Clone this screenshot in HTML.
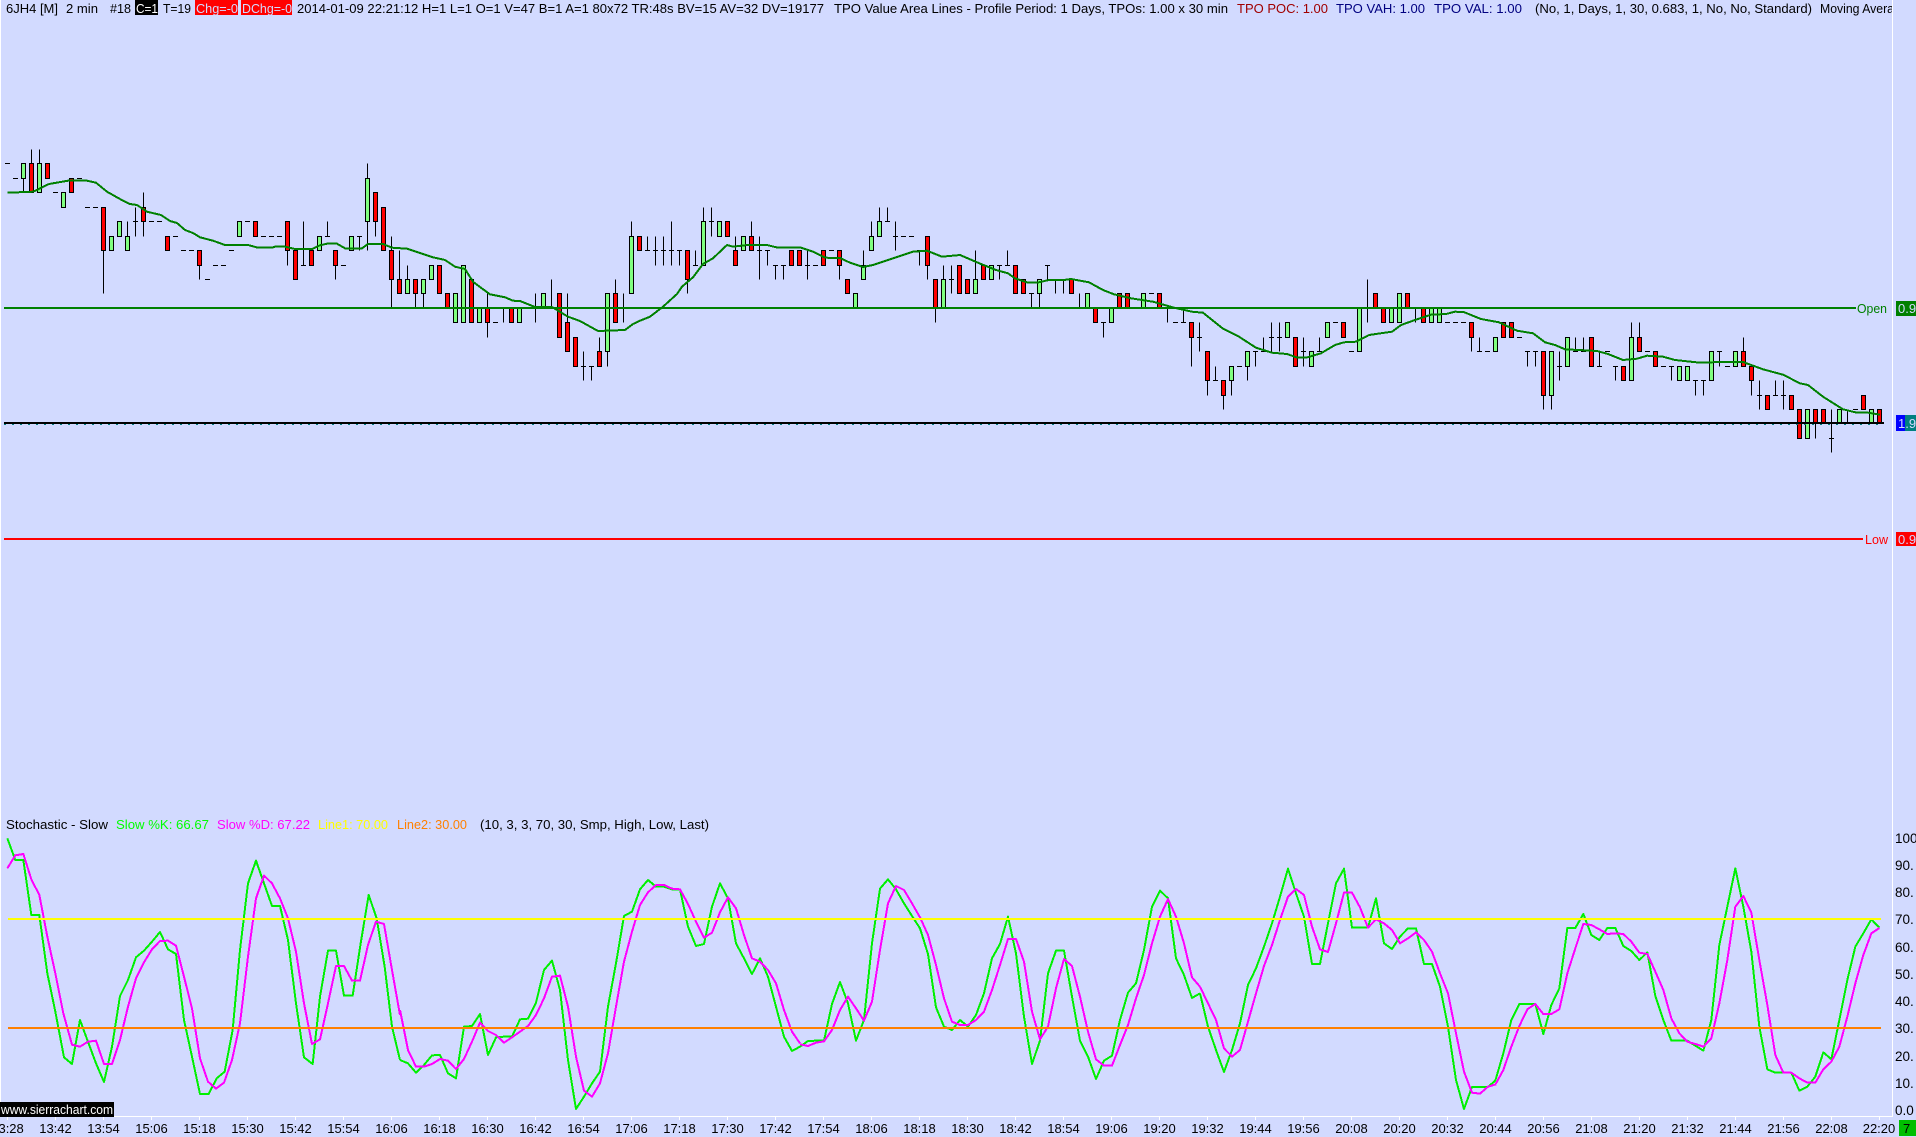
<!DOCTYPE html>
<html><head><meta charset="utf-8"><title>6JH4 Chart</title>
<style>
html,body{margin:0;padding:0;background:#d2daff;width:1916px;height:1137px;overflow:hidden}
svg{display:block;position:absolute;left:0;top:0}
text{font-family:"Liberation Sans",Arial,sans-serif;font-size:12.5px;white-space:pre}
.t text{font-size:13px;text-anchor:middle;fill:#000}
.y text{font-size:13.5px;fill:#000}
</style></head><body>
<svg width="1916" height="1137" viewBox="0 0 1916 1137" xmlns="http://www.w3.org/2000/svg">
<defs><clipPath id="c"><rect x="0" y="0" width="1892" height="20"/></clipPath></defs>
<rect width="1916" height="1137" fill="#d2daff"/>
<g shape-rendering="crispEdges">
<rect x="0" y="0" width="1" height="1116" fill="#fff"/>
<rect x="1892" y="0" width="1" height="1117" fill="#fff"/>
<rect x="0" y="1116" width="1893" height="1" fill="#fff"/>
<path stroke="#fff" stroke-width="1" d="M7.5 1116V1120M55.5 1116V1120M103.5 1116V1120M151.5 1116V1120M199.5 1116V1120M247.5 1116V1120M295.5 1116V1120M343.5 1116V1120M391.5 1116V1120M439.5 1116V1120M487.5 1116V1120M535.5 1116V1120M583.5 1116V1120M631.5 1116V1120M679.5 1116V1120M727.5 1116V1120M775.5 1116V1120M823.5 1116V1120M871.5 1116V1120M919.5 1116V1120M967.5 1116V1120M1015.5 1116V1120M1063.5 1116V1120M1111.5 1116V1120M1159.5 1116V1120M1207.5 1116V1120M1255.5 1116V1120M1303.5 1116V1120M1351.5 1116V1120M1399.5 1116V1120M1447.5 1116V1120M1495.5 1116V1120M1543.5 1116V1120M1591.5 1116V1120M1639.5 1116V1120M1687.5 1116V1120M1735.5 1116V1120M1783.5 1116V1120M1831.5 1116V1120M1879.5 1116V1120"/>

<!-- wicks and dojis -->
<path fill="none" stroke="#000" stroke-width="1" d="M23.5 178.5V192.5M31.5 149.5V163.5M39.5 149.5V163.5M103.5 250.5V293.5M127.5 221.5V236.5M135.5 207.5V236.5M133 221.5h5M143.5 192.5V236.5M199.5 265.5V279.5M287.5 250.5V265.5M303.5 221.5V265.5M301 265.5h5M327.5 221.5V236.5M325 236.5h5M335.5 265.5V279.5M359.5 236.5V250.5M357 236.5h5M367.5 163.5V250.5M375.5 221.5V236.5M391.5 236.5V308.5M399.5 250.5V279.5M407.5 265.5V279.5M415.5 293.5V308.5M423.5 293.5V308.5M487.5 293.5V337.5M503.5 308.5V322.5M535.5 293.5V322.5M551.5 279.5V308.5M567.5 293.5V322.5M583.5 351.5V380.5M581 366.5h5M591.5 366.5V380.5M589 366.5h5M599.5 337.5V351.5M607.5 351.5V366.5M615.5 279.5V293.5M623.5 293.5V322.5M631.5 221.5V236.5M647.5 236.5V250.5M645 250.5h5M655.5 236.5V265.5M653 250.5h5M663.5 236.5V265.5M661 250.5h5M671.5 221.5V265.5M669 250.5h5M679.5 250.5V265.5M677 250.5h5M687.5 279.5V293.5M695.5 250.5V265.5M693 265.5h5M703.5 207.5V221.5M711.5 207.5V236.5M709 221.5h5M735.5 236.5V250.5M751.5 221.5V236.5M759.5 236.5V279.5M757 250.5h5M767.5 250.5V265.5M765 250.5h5M775.5 265.5V279.5M773 265.5h5M783.5 265.5V279.5M781 265.5h5M807.5 250.5V279.5M805 265.5h5M839.5 265.5V279.5M863.5 250.5V265.5M871.5 221.5V236.5M879.5 207.5V221.5M887.5 207.5V221.5M885 221.5h5M895.5 221.5V250.5M893 236.5h5M919.5 250.5V265.5M917 250.5h5M927.5 265.5V279.5M935.5 308.5V322.5M943.5 265.5V279.5M951.5 265.5V293.5M949 279.5h5M975.5 250.5V279.5M999.5 265.5V279.5M997 265.5h5M1007.5 250.5V265.5M1005 265.5h5M1031.5 293.5V308.5M1029 293.5h5M1039.5 293.5V308.5M1047.5 265.5V279.5M1045 265.5h5M1055.5 279.5V293.5M1063.5 279.5V293.5M1079.5 293.5V308.5M1103.5 322.5V337.5M1101 322.5h5M1167.5 308.5V322.5M1183.5 308.5V322.5M1181 322.5h5M1191.5 337.5V366.5M1199.5 322.5V351.5M1197 337.5h5M1207.5 380.5V395.5M1215.5 366.5V380.5M1213 380.5h5M1223.5 395.5V409.5M1231.5 380.5V395.5M1247.5 366.5V380.5M1255.5 351.5V366.5M1253 351.5h5M1263.5 337.5V351.5M1261 351.5h5M1271.5 322.5V351.5M1269 337.5h5M1279.5 322.5V351.5M1277 337.5h5M1303.5 337.5V366.5M1301 351.5h5M1319.5 337.5V351.5M1317 351.5h5M1367.5 279.5V322.5M1415.5 308.5V322.5M1471.5 337.5V351.5M1479.5 337.5V351.5M1477 351.5h5M1527.5 351.5V366.5M1525 351.5h5M1535.5 351.5V366.5M1533 351.5h5M1543.5 395.5V409.5M1551.5 395.5V409.5M1559.5 351.5V380.5M1557 366.5h5M1575.5 337.5V351.5M1573 351.5h5M1583.5 337.5V351.5M1581 351.5h5M1599.5 351.5V366.5M1597 366.5h5M1615.5 366.5V380.5M1613 366.5h5M1631.5 322.5V337.5M1639.5 322.5V337.5M1671.5 366.5V380.5M1669 366.5h5M1695.5 380.5V395.5M1693 380.5h5M1703.5 380.5V395.5M1701 380.5h5M1719.5 351.5V366.5M1717 351.5h5M1743.5 337.5V351.5M1751.5 380.5V395.5M1759.5 380.5V409.5M1757 395.5h5M1775.5 380.5V395.5M1773 395.5h5M1783.5 380.5V409.5M1781 395.5h5M1815.5 423.5V438.5M1831.5 409.5V452.5M1829 438.5h5M1847.5 409.5V423.5
M5 163.5h5M13 178.5h5M53 192.5h5M77 178.5h5M85 207.5h5M93 207.5h5M149 221.5h5M157 221.5h5M173 236.5h5M181 250.5h5M189 250.5h5M205 279.5h5M213 265.5h5M221 265.5h5M229 250.5h5M245 221.5h5M261 236.5h5M269 236.5h5M277 236.5h5M341 265.5h5M493 322.5h5M813 265.5h5M829 250.5h5M901 236.5h5M909 236.5h5M1133 308.5h5M1149 293.5h5M1173 322.5h5M1237 366.5h5M1333 322.5h5M1349 351.5h5M1445 322.5h5M1453 322.5h5M1461 322.5h5M1485 351.5h5M1517 337.5h5M1605 351.5h5M1645 351.5h5M1661 366.5h5M1725 366.5h5M1853 409.5h5"/>

<!-- green bodies -->
<path fill="#80ff80" stroke="#000" stroke-width="1" d="M21.5 163.5h4V178.5h-4zM37.5 163.5h4V192.5h-4zM61.5 192.5h4V207.5h-4zM109.5 236.5h4V250.5h-4zM117.5 221.5h4V236.5h-4zM125.5 236.5h4V250.5h-4zM237.5 221.5h4V236.5h-4zM317.5 236.5h4V250.5h-4zM349.5 236.5h4V250.5h-4zM365.5 178.5h4V221.5h-4zM405.5 279.5h4V293.5h-4zM421.5 279.5h4V293.5h-4zM429.5 265.5h4V279.5h-4zM453.5 293.5h4V322.5h-4zM461.5 265.5h4V322.5h-4zM477.5 308.5h4V322.5h-4zM517.5 308.5h4V322.5h-4zM541.5 293.5h4V308.5h-4zM605.5 293.5h4V351.5h-4zM629.5 236.5h4V293.5h-4zM701.5 221.5h4V265.5h-4zM717.5 221.5h4V236.5h-4zM741.5 236.5h4V250.5h-4zM853.5 293.5h4V308.5h-4zM861.5 265.5h4V279.5h-4zM869.5 236.5h4V250.5h-4zM877.5 221.5h4V236.5h-4zM941.5 279.5h4V308.5h-4zM973.5 279.5h4V293.5h-4zM989.5 265.5h4V279.5h-4zM1037.5 279.5h4V293.5h-4zM1085.5 293.5h4V308.5h-4zM1109.5 308.5h4V322.5h-4zM1141.5 293.5h4V308.5h-4zM1229.5 366.5h4V380.5h-4zM1245.5 351.5h4V366.5h-4zM1285.5 322.5h4V337.5h-4zM1309.5 351.5h4V366.5h-4zM1325.5 322.5h4V337.5h-4zM1357.5 308.5h4V351.5h-4zM1389.5 308.5h4V322.5h-4zM1397.5 293.5h4V322.5h-4zM1429.5 308.5h4V322.5h-4zM1437.5 308.5h4V322.5h-4zM1493.5 337.5h4V351.5h-4zM1549.5 351.5h4V395.5h-4zM1565.5 337.5h4V366.5h-4zM1629.5 337.5h4V380.5h-4zM1677.5 366.5h4V380.5h-4zM1685.5 366.5h4V380.5h-4zM1709.5 351.5h4V380.5h-4zM1733.5 351.5h4V366.5h-4zM1805.5 409.5h4V438.5h-4zM1837.5 409.5h4V423.5h-4zM1869.5 409.5h4V423.5h-4z"/>

<!-- red bodies -->
<path fill="#ff0000" stroke="#000" stroke-width="1" d="M29.5 163.5h4V192.5h-4zM45.5 163.5h4V178.5h-4zM69.5 178.5h4V192.5h-4zM101.5 207.5h4V250.5h-4zM141.5 207.5h4V221.5h-4zM165.5 236.5h4V250.5h-4zM197.5 250.5h4V265.5h-4zM253.5 221.5h4V236.5h-4zM285.5 221.5h4V250.5h-4zM293.5 250.5h4V279.5h-4zM309.5 250.5h4V265.5h-4zM333.5 250.5h4V265.5h-4zM373.5 192.5h4V221.5h-4zM381.5 207.5h4V250.5h-4zM389.5 250.5h4V279.5h-4zM397.5 279.5h4V293.5h-4zM413.5 279.5h4V293.5h-4zM437.5 265.5h4V293.5h-4zM445.5 293.5h4V308.5h-4zM469.5 279.5h4V322.5h-4zM485.5 308.5h4V322.5h-4zM509.5 308.5h4V322.5h-4zM557.5 293.5h4V337.5h-4zM565.5 322.5h4V351.5h-4zM573.5 337.5h4V366.5h-4zM597.5 351.5h4V366.5h-4zM613.5 293.5h4V322.5h-4zM637.5 236.5h4V250.5h-4zM685.5 250.5h4V279.5h-4zM725.5 221.5h4V236.5h-4zM733.5 250.5h4V265.5h-4zM749.5 236.5h4V250.5h-4zM789.5 250.5h4V265.5h-4zM797.5 250.5h4V265.5h-4zM821.5 250.5h4V265.5h-4zM837.5 250.5h4V265.5h-4zM845.5 279.5h4V293.5h-4zM925.5 236.5h4V265.5h-4zM933.5 279.5h4V308.5h-4zM957.5 265.5h4V293.5h-4zM965.5 279.5h4V293.5h-4zM981.5 265.5h4V279.5h-4zM1013.5 265.5h4V293.5h-4zM1021.5 279.5h4V293.5h-4zM1069.5 279.5h4V293.5h-4zM1093.5 308.5h4V322.5h-4zM1117.5 293.5h4V308.5h-4zM1125.5 293.5h4V308.5h-4zM1157.5 293.5h4V308.5h-4zM1189.5 322.5h4V337.5h-4zM1205.5 351.5h4V380.5h-4zM1221.5 380.5h4V395.5h-4zM1293.5 337.5h4V366.5h-4zM1341.5 322.5h4V337.5h-4zM1373.5 293.5h4V308.5h-4zM1381.5 308.5h4V322.5h-4zM1405.5 293.5h4V308.5h-4zM1421.5 308.5h4V322.5h-4zM1469.5 322.5h4V337.5h-4zM1501.5 322.5h4V337.5h-4zM1509.5 322.5h4V337.5h-4zM1541.5 351.5h4V395.5h-4zM1589.5 337.5h4V366.5h-4zM1621.5 366.5h4V380.5h-4zM1637.5 337.5h4V351.5h-4zM1653.5 351.5h4V366.5h-4zM1741.5 351.5h4V366.5h-4zM1749.5 366.5h4V380.5h-4zM1765.5 395.5h4V409.5h-4zM1789.5 395.5h4V409.5h-4zM1797.5 409.5h4V438.5h-4zM1813.5 409.5h4V423.5h-4zM1821.5 409.5h4V423.5h-4zM1861.5 395.5h4V409.5h-4zM1877.5 409.5h4V423.5h-4z"/>

<!-- level lines -->
<rect x="4" y="307" width="1852" height="2" fill="#008000"/>
<rect x="4" y="538" width="1859" height="2" fill="#ff0000"/>
<rect x="4" y="422" width="1880" height="2" fill="#000"/>
<path d="M4 424.5H1884" stroke="#008080" stroke-width="1" stroke-dasharray="2 6"/>

<!-- moving average -->
<polyline fill="none" stroke="#008000" stroke-width="2" points="7.5,192.7 33,191.7 39,189 49,184 68,180.7 87,180.7 96,182.7 107,191.7 123,200.7 130,204 137,205 147,211.7 161,215 170,221 177,223 185,230 193,233 200,237.3 213,240.7 225,245 248,245 258,247.7 272,247.7 275,246.7 285,246.7 295,249 312,249 320,245.3 327,243.7 337,243.7 345,248.3 362,248.3 368,244 383,244 392,247.7 407,248.7 423,254 433,257.3 445,260 455,266.7 465,269 473,281.7 480,287 490,294.3 505,297.3 513,300.7 520,301 535,307 552,307 568,316.7 580,321 598,331 625,330 633,324 640,320.7 650,316.7 663,306.7 677,294 682,286.7 693,277.3 703,264 713,258.3 727,245 733,246.7 747,245 767,245 778,247.7 800,247.3 813,251.7 825,257.7 840,258 850,262.7 863,267 873,265 893,258.3 913,251.7 927,250.7 942,256.7 960,255 981,264 996,270 1008,273.3 1015,278.3 1028,282.7 1037,282.7 1049,280 1064,280 1071,279 1089,282.3 1103,290 1114,294.3 1131,298.3 1153,301.7 1174,307.7 1192,311.7 1203,312.7 1222.5,328.3 1239,336.7 1256,347.7 1272,352.7 1287,354 1297.5,357.7 1306,357.7 1321,353.3 1335,345 1344,342.3 1356,341.7 1369,335 1392,331.7 1401,325 1417,319.3 1431,314.7 1446,314 1455,311.7 1463.6,312 1481,319 1499,322.3 1517,330.7 1533,333.3 1545,342.3 1555,345 1565,349.3 1597,351 1608,354 1623,360 1637,358.7 1647,355.7 1663,356.7 1675,360 1700,362.7 1720,362 1743,362 1763,369.3 1783,374.7 1800,383.3 1808,385 1823,396.7 1843,409.3 1857,412.7 1868,412.7 1880,414.7"/>

<!-- stochastic %K -->
<g fill="none" stroke="#00f000" stroke-width="6" stroke-linejoin="round">
<polyline transform="translate(0 830) scale(.33333)" points="22,25 46,90 70,90 94,255 118,255 142,430 166,545 192,682 216,702 240,570 262,630 288,700 312,756 336,650 360,498 384,450 408,382 432,362 456,335 480,306 504,358 528,372 552,570 576,680 600,792 626,792 650,745 674,725 698,600 720,360 744,160 768,92 792,160 816,228 840,228 864,330 888,520 912,682 938,702 960,500 984,362 1008,362 1032,497 1058,497 1082,340 1106,195 1130,265 1154,410 1176,590 1200,690"/>
<polyline transform="translate(400 830) scale(.33333)" points="0,690 24,700 48,728 72,705 96,676 120,675 144,730 168,745 192,590 216,588 240,552 264,675 288,622 312,620 336,620 360,568 384,566 408,518 432,420 456,392 480,480 504,690 528,837 552,800 576,760 600,725 624,530 648,400 672,258 696,245 720,178 744,150 768,170 792,170 816,178 840,178 864,290 888,348 912,342 936,230 960,160 984,205 1008,340 1032,385 1056,432 1080,385 1104,440 1128,530 1152,620 1176,663 1200,650"/>
<polyline transform="translate(800 830) scale(.33333)" points="0,650 24,633 48,632 72,632 96,522 120,456 144,520 168,632 192,570 216,340 240,176 264,148 288,178 312,220 336,258 360,295 384,372 408,532 432,590 456,600 480,570 504,590 528,555 552,490 576,385 600,342 624,260 648,370 672,560 696,702 720,632 744,430 768,362 792,362 816,500 840,632 864,680 888,747 912,692 936,677 960,570 984,488 1008,460 1032,360 1056,230 1080,182 1104,205 1128,385 1152,435 1176,504 1200,490"/>
<polyline transform="translate(1150 830) scale(.33333)" points="150,490 174,590 198,660 222,726 246,660 270,580 294,465 318,415 342,350 366,280 390,200 414,116 438,190 462,260 486,402 510,402 534,280 558,160 582,116 606,293 630,293 654,293 678,205 702,340 726,357 750,320 774,295 798,295 822,402 846,402 870,470 894,590 918,750 942,837 966,771 990,771 1014,771 1038,750"/>
<polyline transform="translate(1500 820) scale(.33333)" points="-13.5,780 10,700 34,600 58,552 82,552 106,552 130,642 154,555 178,505 202,324 226,324 250,282 274,345 298,360 322,324 346,324 370,378 394,393 418,420 442,397 466,528 490,600 514,662 538,662 562,662 586,677 610,692 634,600 658,375 682,260 706,145 730,260 754,395 778,620 802,748 826,758 850,758 874,758 898,812 922,800 946,770 970,697 994,718 1018,600 1042,480 1066,380 1090,340 1114,298 1138,323"/>
</g>
<!-- stochastic %D -->
<g fill="none" stroke="#ff00ff" stroke-width="6" stroke-linejoin="round">
<polyline transform="translate(0 830) scale(.33333)" points="22,115 46,76 70,72 94,148 118,195 142,320 166,430 190,550 216,644 240,650 264,635 288,632 312,702 336,702 360,630 384,530 408,445 432,397 456,358 480,333 504,332 528,347 552,440 576,535 600,685 624,755 648,776 672,758 696,690 720,580 744,380 768,205 792,137 816,160 840,205 864,265 888,365 912,520 936,642 960,628 984,520 1008,408 1032,408 1056,452 1080,452 1104,345 1128,275 1152,282 1176,420 1200,555"/>
<polyline transform="translate(400 830) scale(.33333)" points="0,540 24,660 48,710 72,710 96,702 120,687 144,692 168,717 192,687 216,635 240,578 264,603 288,615 312,638 336,622 360,605 384,588 408,555 432,505 456,440 480,437 504,530 528,680 552,782 576,800 600,760 624,670 648,530 672,395 696,305 720,225 744,187 768,165 792,165 816,176 840,178 864,222 888,275 912,323 936,308 960,247 984,202 1008,235 1032,315 1056,385 1080,395 1104,420 1128,460 1152,540 1176,605 1200,640"/>
<polyline transform="translate(800 830) scale(.33333)" points="0,643 24,648 48,638 72,634 96,600 120,540 144,500 168,535 192,572 216,515 240,360 264,220 288,168 312,180 336,220 360,262 384,315 408,405 432,505 456,575 480,585 504,585 528,570 552,545 576,480 600,405 624,327 648,327 672,395 696,545 720,628 744,590 768,475 792,387 816,408 840,500 864,605 888,688 912,707 936,707 960,645 984,585 1008,505 1032,435 1056,340 1080,260 1104,207 1128,260 1152,340 1176,442 1200,470"/>
<polyline transform="translate(1150 830) scale(.33333)" points="150,470 174,520 198,570 222,655 246,680 270,660 294,575 318,490 342,408 366,345 390,270 414,200 438,177 462,195 486,290 510,358 534,366 558,280 582,188 606,188 630,232 654,293 678,268 702,280 726,300 750,340 774,325 798,307 822,330 846,365 870,430 894,490 918,610 942,725 966,788 990,791 1014,770 1038,763"/>
<polyline transform="translate(1500 820) scale(.33333)" points="-13.5,793 10,750 34,680 58,618 82,568 106,552 130,582 154,582 178,568 202,460 226,385 250,312 274,315 298,328 322,342 346,340 370,342 394,365 418,398 442,402 466,455 490,510 514,595 538,640 562,665 586,672 610,680 634,655 658,550 682,420 706,260 730,228 754,278 778,420 802,555 826,705 850,758 874,758 898,775 922,788 946,788 970,748 994,725 1018,680 1042,590 1066,490 1090,405 1114,340 1138,324"/>
</g>
<rect x="8" y="918" width="1873" height="2" fill="#ffff00"/>
<rect x="8" y="1027" width="1873" height="2" fill="#ff8000"/>

<!-- header backgrounds -->
<rect x="135" y="0" width="23" height="15" fill="#000"/>
<rect x="195" y="0" width="43" height="15" fill="#ff0000"/>
<rect x="241" y="0" width="51" height="15" fill="#ff0000"/>

<!-- price labels backgrounds -->
<rect x="1896" y="301" width="20" height="15" fill="#008000"/>
<rect x="1896" y="415" width="9" height="16" fill="#0000ff"/>
<rect x="1905" y="415" width="11" height="16" fill="#008080"/>
<rect x="1896" y="532" width="20" height="14" fill="#ff0000"/>
<rect x="1899" y="1120" width="17" height="16" fill="#00be00"/>
<rect x="0" y="1102" width="114" height="15" fill="#000"/>
</g>

<g clip-path="url(#c)">
<text x="6" y="13" textLength="52" lengthAdjust="spacingAndGlyphs">6JH4 [M]</text>
<text x="66" y="13" textLength="32" lengthAdjust="spacingAndGlyphs">2 min</text>
<text x="110" y="13" textLength="21" lengthAdjust="spacingAndGlyphs">#18</text>
<text x="136" y="13" textLength="22" lengthAdjust="spacingAndGlyphs" fill="#fff">C=1</text>
<text x="163" y="13" textLength="28" lengthAdjust="spacingAndGlyphs">T=19</text>
<text x="196" y="13" textLength="42" lengthAdjust="spacingAndGlyphs" fill="#d2daff">Chg=-0</text>
<text x="242" y="13" textLength="50" lengthAdjust="spacingAndGlyphs" fill="#d2daff">DChg=-0</text>
<text x="297" y="13" textLength="527" lengthAdjust="spacingAndGlyphs">2014-01-09 22:21:12 H=1 L=1 O=1 V=47 B=1 A=1 80x72 TR:48s BV=15 AV=32 DV=19177</text>
<text x="834" y="13" textLength="394" lengthAdjust="spacingAndGlyphs">TPO Value Area Lines - Profile Period: 1 Days, TPOs: 1.00 x 30 min</text>
<text x="1237" y="13" textLength="91" lengthAdjust="spacingAndGlyphs" fill="#a00000">TPO POC: 1.00</text>
<text x="1336" y="13" textLength="89" lengthAdjust="spacingAndGlyphs" fill="#000080">TPO VAH: 1.00</text>
<text x="1434" y="13" textLength="88" lengthAdjust="spacingAndGlyphs" fill="#000080">TPO VAL: 1.00</text>
<text x="1535" y="13" textLength="277" lengthAdjust="spacingAndGlyphs">(No, 1, Days, 1, 30, 0.683, 1, No, No, Standard)</text>
<text x="1820" y="13" textLength="74" lengthAdjust="spacingAndGlyphs">Moving Avera</text>
</g>

<text x="1857" y="313" textLength="30" lengthAdjust="spacingAndGlyphs" fill="#008000" style="font-size:13px">Open</text>
<text x="1865" y="544" textLength="23" lengthAdjust="spacingAndGlyphs" fill="#ff0000" style="font-size:13px">Low</text>
<text x="1898" y="313" fill="#d2daff" style="font-size:13px">0.9</text>
<text x="1898" y="428" fill="#d2daff" style="font-size:13px">1.9</text>
<text x="1898" y="544" fill="#d2daff" style="font-size:13px">0.9</text>

<text x="6" y="829" textLength="102" lengthAdjust="spacingAndGlyphs">Stochastic - Slow</text>
<text x="116" y="829" textLength="93" lengthAdjust="spacingAndGlyphs" fill="#00ff00">Slow %K: 66.67</text>
<text x="217" y="829" textLength="93" lengthAdjust="spacingAndGlyphs" fill="#ff00ff">Slow %D: 67.22</text>
<text x="318" y="829" textLength="70" lengthAdjust="spacingAndGlyphs" fill="#ffff00">Line1: 70.00</text>
<text x="397" y="829" textLength="70" lengthAdjust="spacingAndGlyphs" fill="#ff8000">Line2: 30.00</text>
<text x="480" y="829" textLength="229" lengthAdjust="spacingAndGlyphs">(10, 3, 3, 70, 30, Smp, High, Low, Last)</text>

<g class="y">
<text x="1895" y="843">100</text>
<text x="1895" y="870">90.</text>
<text x="1895" y="897">80.</text>
<text x="1895" y="924">70.</text>
<text x="1895" y="952">60.</text>
<text x="1895" y="979">50.</text>
<text x="1895" y="1006">40.</text>
<text x="1895" y="1033">30.</text>
<text x="1895" y="1061">20.</text>
<text x="1895" y="1088">10.</text>
<text x="1895" y="1115">0.0</text>
</g>

<g class="t">
<text x="7.5" y="1133">13:28</text><text x="55.5" y="1133">13:42</text><text x="103.5" y="1133">13:54</text><text x="151.5" y="1133">15:06</text><text x="199.5" y="1133">15:18</text><text x="247.5" y="1133">15:30</text><text x="295.5" y="1133">15:42</text><text x="343.5" y="1133">15:54</text><text x="391.5" y="1133">16:06</text><text x="439.5" y="1133">16:18</text><text x="487.5" y="1133">16:30</text><text x="535.5" y="1133">16:42</text><text x="583.5" y="1133">16:54</text><text x="631.5" y="1133">17:06</text><text x="679.5" y="1133">17:18</text><text x="727.5" y="1133">17:30</text><text x="775.5" y="1133">17:42</text><text x="823.5" y="1133">17:54</text><text x="871.5" y="1133">18:06</text><text x="919.5" y="1133">18:18</text><text x="967.5" y="1133">18:30</text><text x="1015.5" y="1133">18:42</text><text x="1063.5" y="1133">18:54</text><text x="1111.5" y="1133">19:06</text><text x="1159.5" y="1133">19:20</text><text x="1207.5" y="1133">19:32</text><text x="1255.5" y="1133">19:44</text><text x="1303.5" y="1133">19:56</text><text x="1351.5" y="1133">20:08</text><text x="1399.5" y="1133">20:20</text><text x="1447.5" y="1133">20:32</text><text x="1495.5" y="1133">20:44</text><text x="1543.5" y="1133">20:56</text><text x="1591.5" y="1133">21:08</text><text x="1639.5" y="1133">21:20</text><text x="1687.5" y="1133">21:32</text><text x="1735.5" y="1133">21:44</text><text x="1783.5" y="1133">21:56</text><text x="1831.5" y="1133">22:08</text><text x="1879" y="1133">22:20</text>
</g>
<text x="1903" y="1133" style="font-size:13px" fill="#000">7</text>
<text x="1" y="1114" textLength="112" lengthAdjust="spacingAndGlyphs" fill="#fff" style="font-size:13px">www.sierrachart.com</text>
</svg>
</body></html>
